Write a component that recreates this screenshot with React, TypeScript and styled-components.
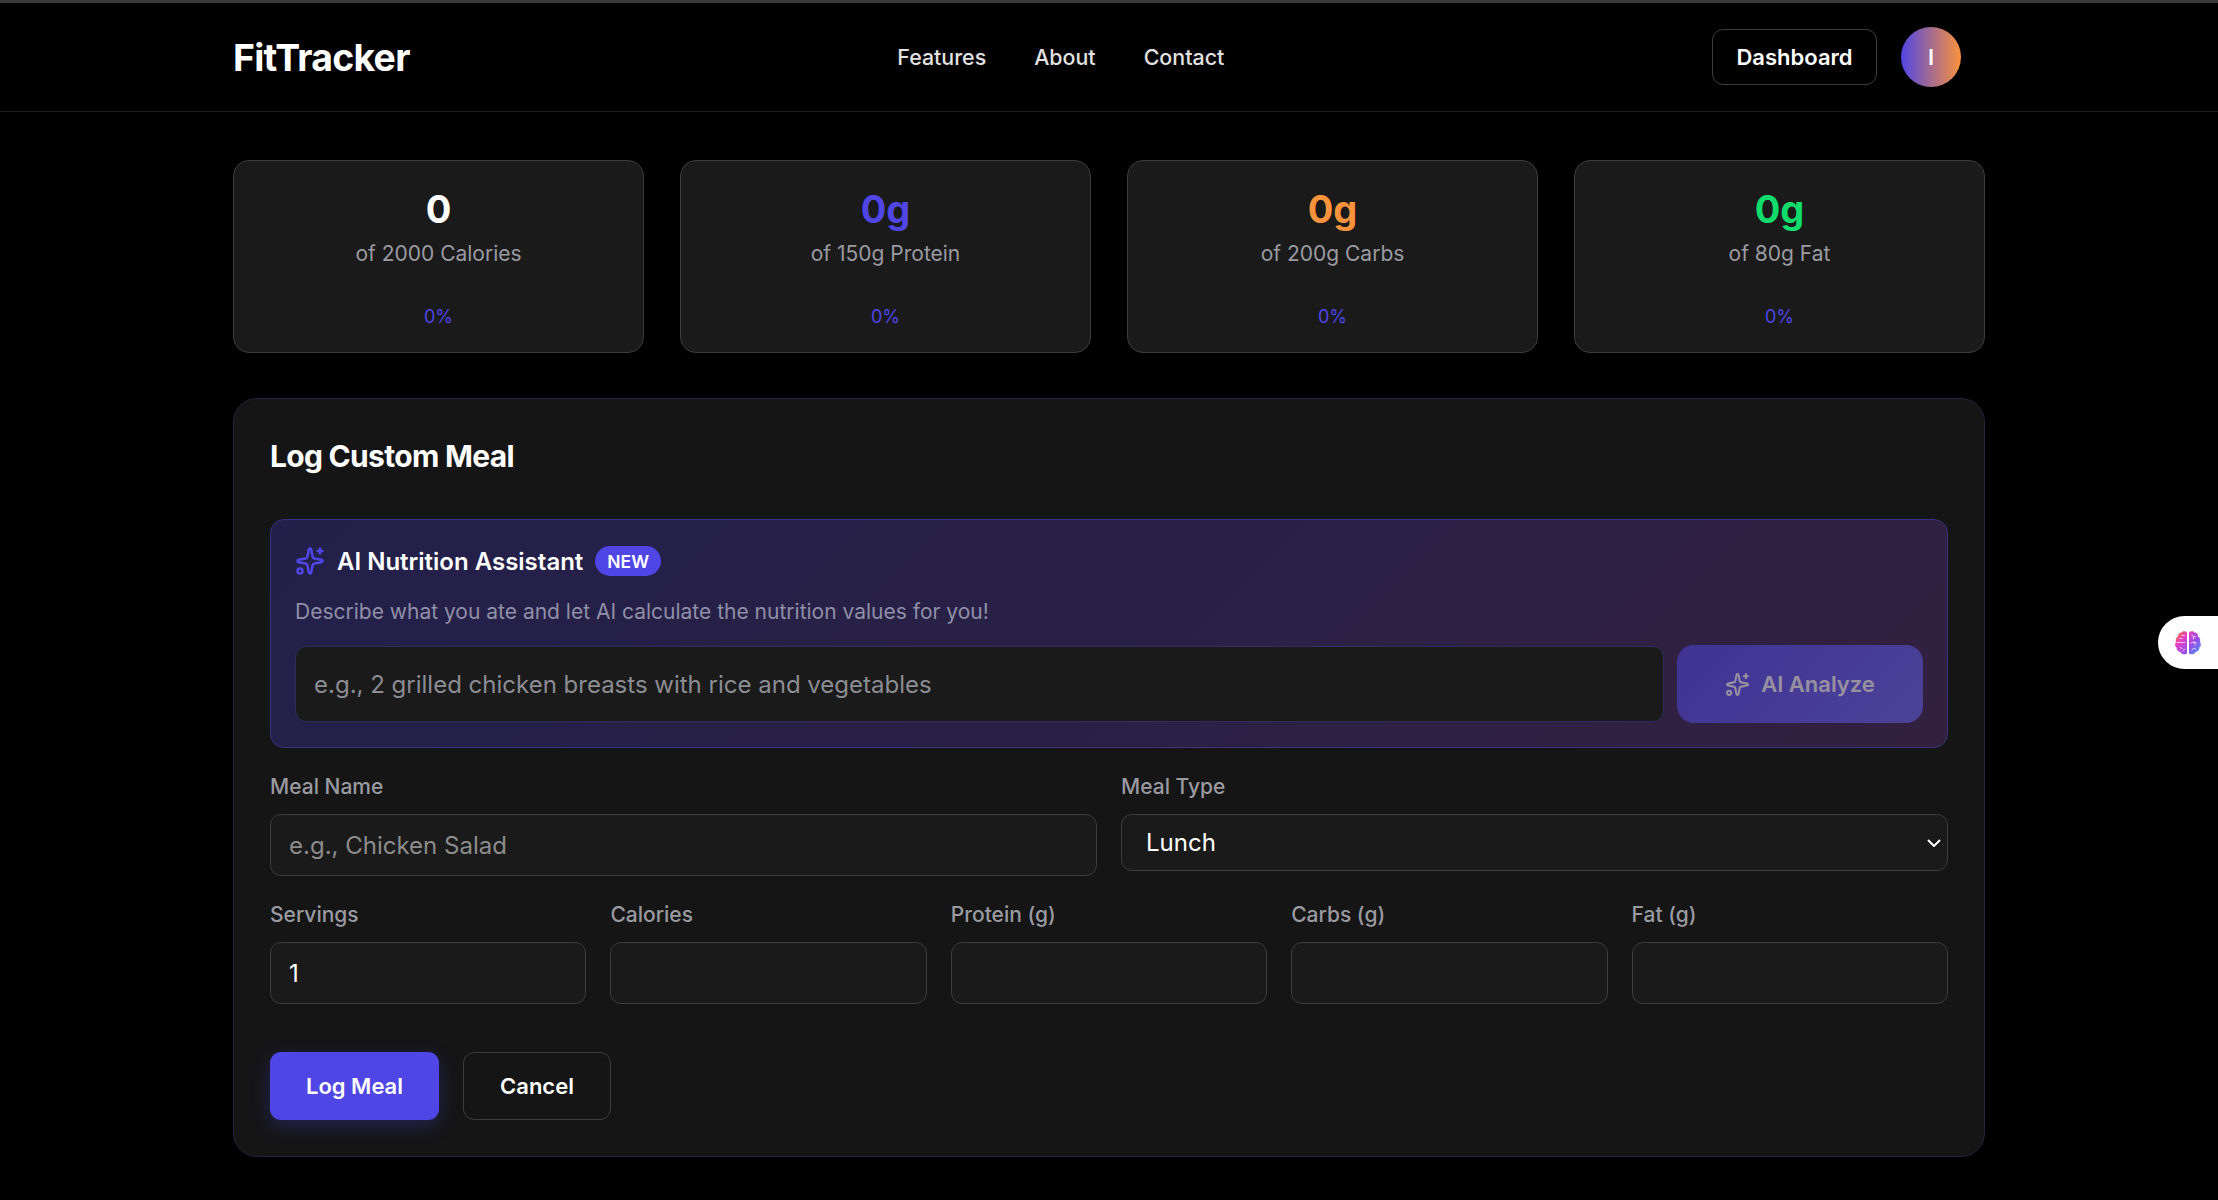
import React from "react";
import styled, { createGlobalStyle } from "styled-components";
import { Sparkles } from "lucide-react";

const PALETTE = {
  INDIGO: "#4f46e5",
  ORANGE: "#fb923c",
  GREEN: "#10dc6c",
  WHITE: "#ffffff",
  MUTED: "#9a9aa2",
  BORDER: "#3c3c3c",
  FIELD: "#1a1a1a",
  PANEL: "#151515",
};

const CHEVRON =
  "url(\"data:image/svg+xml,%3Csvg xmlns='http://www.w3.org/2000/svg' width='14' height='8' viewBox='0 0 14 8' fill='none'%3E%3Cpath d='M1 1l6 6 6-6' stroke='%23fff' stroke-width='2'/%3E%3C/svg%3E\")";

const GlobalStyle = createGlobalStyle`
  * {
    box-sizing: border-box;
  }

  body {
    margin: 0;
    background: #000;
    color: ${PALETTE.WHITE};
    font-family: Inter, "Liberation Sans", sans-serif;
    overflow: hidden;
  }
`;

const Page = styled.div`
  position: relative;
  height: 1200px;
  border-top: 3px solid #3a3a3a;
`;

const Header = styled.header`
  height: 109px;
  border-bottom: 1px solid #1c1c1c;
`;

const HeaderInner = styled.div`
  width: 1752px;
  height: 108px;
  margin: 0 auto;
  padding-right: 24px;
  display: flex;
  justify-content: space-between;
  align-items: center;
`;

const Logo = styled.div`
  font-size: 37.4px;
  font-weight: 700;
  letter-spacing: -0.75px;
`;

const NavLinks = styled.nav`
  display: flex;
  gap: 48px;
`;

const NavLink = styled.a`
  font-size: 21.4px;
  font-weight: 500;
  color: #e2e2e2;
`;

const HeaderActions = styled.div`
  display: flex;
  align-items: center;
  gap: 24px;
`;

const DashboardButton = styled.button`
  width: 165px;
  height: 56px;
  background: #000;
  border: 1px solid ${PALETTE.BORDER};
  border-radius: 11px;
  color: ${PALETTE.WHITE};
  font-family: inherit;
  font-size: 22px;
  font-weight: 600;
`;

const Avatar = styled.div`
  width: 60px;
  height: 60px;
  border-radius: 50%;
  background: linear-gradient(90deg, ${PALETTE.INDIGO}, ${PALETTE.ORANGE});
  display: flex;
  align-items: center;
  justify-content: center;
  font-size: 22px;
  font-weight: 600;
`;

const Main = styled.main`
  width: 1752px;
  margin: 0 auto;
  padding-top: 48px;
`;

const StatsGrid = styled.section`
  display: grid;
  grid-template-columns: repeat(4, 1fr);
  gap: 36px;
  margin-bottom: 45px;
`;

const StatCard = styled.div`
  height: 193px;
  padding: 24px;
  background: ${PALETTE.FIELD};
  border: 1px solid ${PALETTE.BORDER};
  border-radius: 16px;
  text-align: center;
`;

const StatValue = styled.div<{ $color: string }>`
  height: 48px;
  line-height: 48px;
  font-size: 38px;
  font-weight: 700;
  color: ${(props) => props.$color};
`;

const StatLabel = styled.div`
  margin-top: 6px;
  line-height: 30px;
  font-size: 21px;
  color: ${PALETTE.MUTED};
`;

const StatPercent = styled.div`
  margin-top: 36px;
  line-height: 24px;
  font-size: 18px;
  color: ${PALETTE.INDIGO};
`;

const Panel = styled.section`
  height: 759px;
  padding: 36px;
  background: ${PALETTE.PANEL};
  border: 1px solid #25233f;
  border-radius: 24px;
`;

const PanelTitle = styled.h2`
  margin: 0 0 42px;
  height: 42px;
  line-height: 42px;
  font-size: 30px;
  font-weight: 700;
  letter-spacing: -0.7px;
`;

const AiBox = styled.div`
  height: 229px;
  padding: 23px 24px 24px;
  background: linear-gradient(135deg, #22204a 0%, #2b2045 60%, #33203f 100%);
  border: 1px solid #39337f;
  border-radius: 14px;
`;

const AiHead = styled.div`
  height: 36px;
  display: flex;
  align-items: center;
  color: ${PALETTE.INDIGO};
`;

const AiTitle = styled.span`
  margin-left: 12px;
  font-size: 24px;
  font-weight: 600;
  color: ${PALETTE.WHITE};
`;

const NewBadge = styled.span`
  margin-left: 12px;
  height: 30px;
  padding: 0 12px;
  display: flex;
  align-items: center;
  background: ${PALETTE.INDIGO};
  border-radius: 15px;
  font-size: 17.5px;
  font-weight: 600;
  color: ${PALETTE.WHITE};
`;

const AiDescription = styled.p`
  margin: 18px 0;
  line-height: 30px;
  font-size: 21px;
  color: #8f8fa6;
`;

const AiRow = styled.div`
  display: flex;
  align-items: center;
  gap: 13px;
`;

const AiInput = styled.input`
  flex: 1;
  height: 76px;
  padding: 0 18px;
  background: ${PALETTE.FIELD};
  border: 1px solid #302c5c;
  border-radius: 11px;
  color: ${PALETTE.WHITE};
  font-family: inherit;
  font-size: 24px;

  &::placeholder {
    color: #8c8c94;
    opacity: 1;
  }
`;

const AnalyzeButton = styled.button`
  width: 246px;
  height: 78px;
  display: flex;
  align-items: center;
  justify-content: center;
  gap: 11px;
  background: linear-gradient(135deg, ${PALETTE.INDIGO}, #6366f1);
  border: 0;
  border-radius: 17px;
  color: ${PALETTE.WHITE};
  font-family: inherit;
  font-size: 22px;
  font-weight: 600;
  opacity: 0.5;
`;

const FieldsRow = styled.div<{ $columns: number }>`
  display: grid;
  grid-template-columns: repeat(${(props) => props.$columns}, 1fr);
  align-items: start;
  gap: 24px;
  margin-top: 24px;
`;

const Field = styled.label`
  display: block;
`;

const FieldLabel = styled.span`
  display: block;
  margin-bottom: 12px;
  line-height: 30px;
  font-size: 21px;
  font-weight: 500;
  color: ${PALETTE.MUTED};
`;

const TextInput = styled.input`
  display: block;
  width: 100%;
  height: 62px;
  padding: 0 18px;
  background: ${PALETTE.FIELD};
  border: 1px solid ${PALETTE.BORDER};
  border-radius: 11px;
  color: ${PALETTE.WHITE};
  font-family: inherit;
  font-size: 24px;

  &::placeholder {
    color: #8c8c8c;
    opacity: 1;
  }
`;

const SelectInput = styled.select`
  display: block;
  width: 100%;
  height: 57px;
  padding: 0 24px;
  appearance: none;
  background: ${PALETTE.FIELD} ${CHEVRON} no-repeat right 6px center;
  border: 1px solid ${PALETTE.BORDER};
  border-radius: 11px;
  color: ${PALETTE.WHITE};
  font-family: inherit;
  font-size: 24px;
`;

const Actions = styled.div`
  display: flex;
  gap: 24px;
  margin-top: 48px;
`;

const PrimaryButton = styled.button`
  width: 169px;
  height: 68px;
  background: ${PALETTE.INDIGO};
  border: 0;
  border-radius: 11px;
  box-shadow: 0 6px 20px rgba(79, 70, 229, 0.3);
  color: ${PALETTE.WHITE};
  font-family: inherit;
  font-size: 22px;
  font-weight: 600;
`;

const GhostButton = styled.button`
  width: 148px;
  height: 68px;
  background: transparent;
  border: 1px solid ${PALETTE.BORDER};
  border-radius: 11px;
  color: ${PALETTE.WHITE};
  font-family: inherit;
  font-size: 22px;
  font-weight: 600;
`;

const AssistantTab = styled.div`
  position: absolute;
  top: 613px;
  right: 0;
  width: 60px;
  height: 53px;
  padding-left: 16px;
  display: flex;
  align-items: center;
  background: ${PALETTE.WHITE};
  border-radius: 27px 0 0 27px;
`;

const BrainIcon = () => (
  <svg width="28" height="26" viewBox="0 0 28 26" fill="none">
    <defs>
      <linearGradient id="brainFill" gradientUnits="userSpaceOnUse" x1="2" y1="1" x2="27" y2="25">
        <stop offset="0" stopColor="#fb8a1e" />
        <stop offset="0.28" stopColor="#e83fc0" />
        <stop offset="0.6" stopColor="#9b4fe8" />
        <stop offset="1" stopColor="#3b9cf6" />
      </linearGradient>
    </defs>
    <path
      fill="url(#brainFill)"
      d="M13 2.5C11.5.8 8.5.8 7.5 2.6 5 2.6 3.6 4.6 4 6.6 2 7.6 1.2 10 2 12 .6 13.6.8 16.4 2.6 17.6 2.4 20 4 22 6.4 22 7.4 24.4 11 25 13 23.4Z"
    />
    <path
      fill="url(#brainFill)"
      d="M15 2.5C16.5.8 19.5.8 20.5 2.6 23 2.6 24.4 4.6 24 6.6 26 7.6 26.8 10 26 12 27.4 13.6 27.2 16.4 25.4 17.6 25.6 20 24 22 21.6 22 20.6 24.4 17 25 15 23.4Z"
    />
    <path
      stroke="#fff"
      strokeWidth="0.8"
      strokeLinecap="round"
      opacity="0.85"
      d="M3 12.5H11M8 5.5H10.5M6 8.5H8M6 17.5 8 18.5M9 20.5 11 19M18 5 19.5 7 21.5 6.5M19.5 7V9M17 13 20 12 22.5 13M20 12 21 15M18 20 20 18 22 19.5"
    />
  </svg>
);

const STATS = [
  { value: "0", label: "of 2000 Calories", color: PALETTE.WHITE },
  { value: "0g", label: "of 150g Protein", color: PALETTE.INDIGO },
  { value: "0g", label: "of 200g Carbs", color: PALETTE.ORANGE },
  { value: "0g", label: "of 80g Fat", color: PALETTE.GREEN },
];

const NUMBER_FIELDS = [
  { label: "Servings", value: "1" },
  { label: "Calories", value: "" },
  { label: "Protein (g)", value: "" },
  { label: "Carbs (g)", value: "" },
  { label: "Fat (g)", value: "" },
];

export default function App() {
  return (
    <Page>
      <GlobalStyle />
      <Header>
        <HeaderInner>
          <Logo>FitTracker</Logo>
          <NavLinks>
            <NavLink>Features</NavLink>
            <NavLink>About</NavLink>
            <NavLink>Contact</NavLink>
          </NavLinks>
          <HeaderActions>
            <DashboardButton>Dashboard</DashboardButton>
            <Avatar>I</Avatar>
          </HeaderActions>
        </HeaderInner>
      </Header>

      <Main>
        <StatsGrid>
          {STATS.map((stat) => (
            <StatCard key={stat.label}>
              <StatValue $color={stat.color}>{stat.value}</StatValue>
              <StatLabel>{stat.label}</StatLabel>
              <StatPercent>0%</StatPercent>
            </StatCard>
          ))}
        </StatsGrid>

        <Panel>
          <PanelTitle>Log Custom Meal</PanelTitle>

          <AiBox>
            <AiHead>
              <Sparkles size={30} strokeWidth={2} />
              <AiTitle>AI Nutrition Assistant</AiTitle>
              <NewBadge>NEW</NewBadge>
            </AiHead>
            <AiDescription>
              Describe what you ate and let AI calculate the nutrition values for you!
            </AiDescription>
            <AiRow>
              <AiInput placeholder="e.g., 2 grilled chicken breasts with rice and vegetables" />
              <AnalyzeButton disabled>
                <Sparkles size={25} strokeWidth={2} />
                AI Analyze
              </AnalyzeButton>
            </AiRow>
          </AiBox>

          <FieldsRow $columns={2}>
            <Field>
              <FieldLabel>Meal Name</FieldLabel>
              <TextInput placeholder="e.g., Chicken Salad" />
            </Field>
            <Field>
              <FieldLabel>Meal Type</FieldLabel>
              <SelectInput defaultValue="Lunch">
                <option>Breakfast</option>
                <option>Lunch</option>
                <option>Dinner</option>
                <option>Snack</option>
              </SelectInput>
            </Field>
          </FieldsRow>

          <FieldsRow $columns={5}>
            {NUMBER_FIELDS.map((field) => (
              <Field key={field.label}>
                <FieldLabel>{field.label}</FieldLabel>
                <TextInput defaultValue={field.value} />
              </Field>
            ))}
          </FieldsRow>

          <Actions>
            <PrimaryButton>Log Meal</PrimaryButton>
            <GhostButton>Cancel</GhostButton>
          </Actions>
        </Panel>
      </Main>

      <AssistantTab>
        <BrainIcon />
      </AssistantTab>
    </Page>
  );
}
